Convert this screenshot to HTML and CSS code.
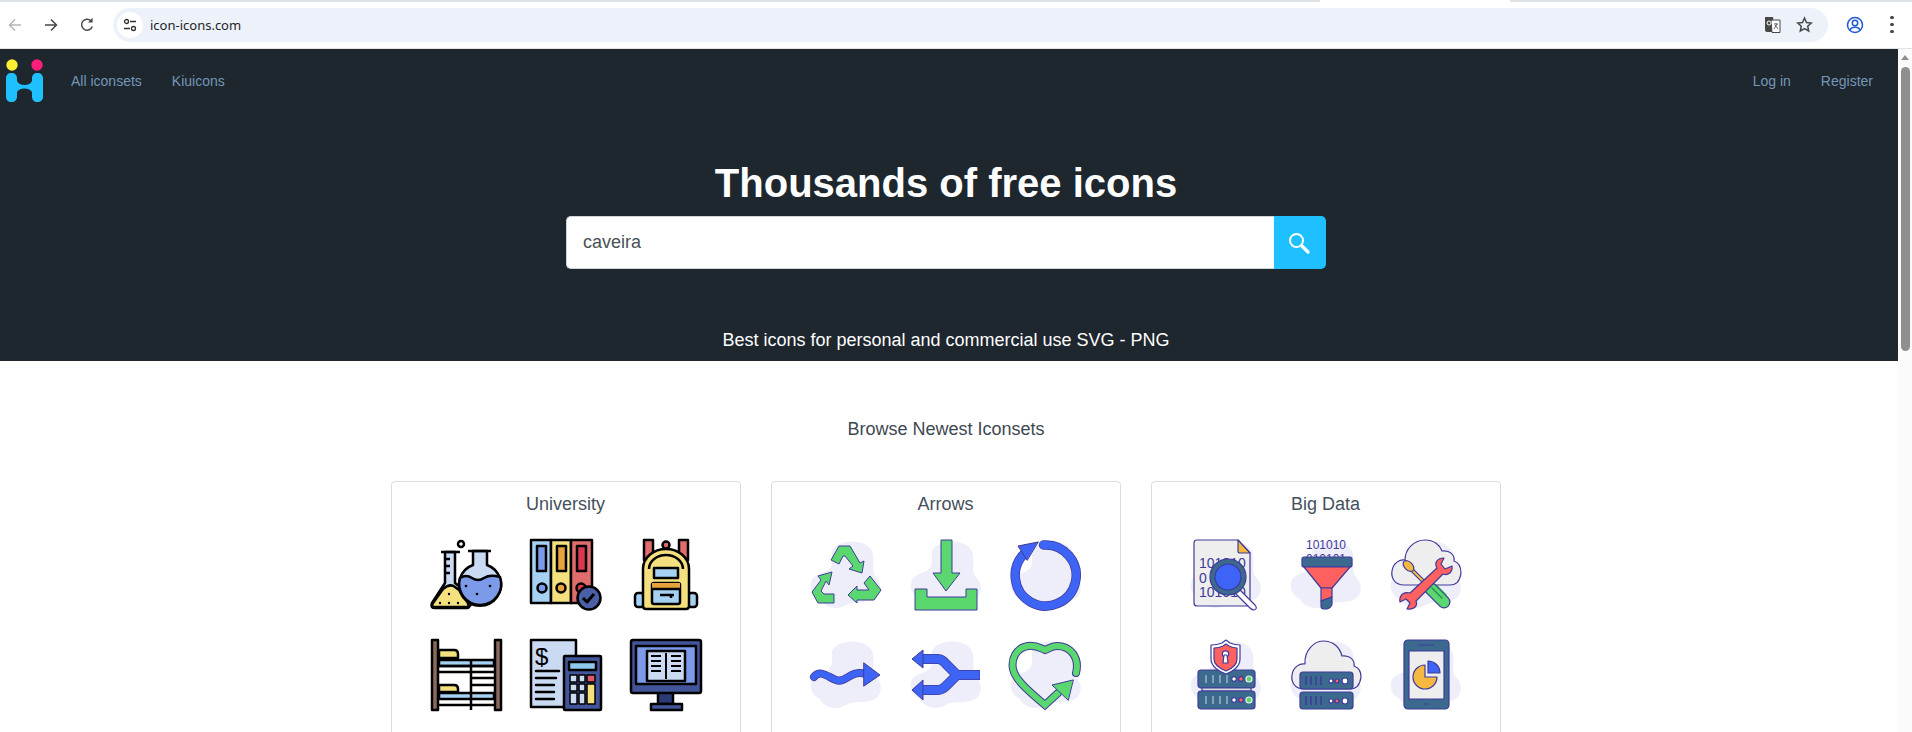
FILE: index.html
```html
<!DOCTYPE html>
<html lang="en">
<head>
    <meta charset="UTF-8">
    <meta name="viewport" content="width=device-width, initial-scale=1.0">
    <title>icon-icons.com</title>
    <link rel="stylesheet" href="styles.css">
</head>
<body>
    <svg class="defs" width="0" height="0">
        <symbol id="blob" viewBox="0 0 72 72">
            <path fill="#eeeefb" d="M22 12C28 0 55-1 62 12C66 22 60 32 66 38C74 46 72 60 60 62C50 64 42 62 36 66C26 72 14 68 10 60C0 56-2 44 4 38C12 32 22 34 22 22Z"/>
        </symbol>
    </svg>

    <!-- browser toolbar -->
    <div class="tabstrip"><span class="tab-gap"></span></div>
    <header class="toolbar">
        <svg class="tool" viewBox="0 0 16 16"><path d="M14 8H2.500M8 2.500 2.500 8 8 13.500" fill="none" stroke="#b4b6b8" stroke-width="1.500"/></svg>
        <svg class="tool" viewBox="0 0 16 16"><path d="M2 8h11.500M8 2.500 13.500 8 8 13.500" fill="none" stroke="#474747" stroke-width="1.500"/></svg>
        <svg class="tool" viewBox="0 0 16 16"><path d="M13.300 9.500A5.500 5.500 0 1 1 12 3.800" fill="none" stroke="#474747" stroke-width="1.500"/><path d="M13.600.800v4.600H9z" fill="#474747"/></svg>
        <div class="urlbar">
            <span class="site-info">
                <svg width="16" height="16" viewBox="0 0 16 16" fill="none" stroke="#303030" stroke-width="1.300"><circle cx="4.500" cy="4.500" r="2"/><path d="M8 4.500h6M2 11.500h6"/><circle cx="11.500" cy="11.500" r="2"/></svg>
            </span>
            <span class="url">icon-icons.com</span>
            <span class="url-actions">
                <svg width="17" height="17" viewBox="0 0 17 17"><path d="M1 1h8l2 15H3a2 2 0 0 1-2-2z" fill="#474747"/><path d="M7 4h9v12.500H8z" fill="#fff" stroke="#474747"/><path d="M10 8h4M12 7v1M13 8l-3 5M11 9l3 4" stroke="#474747" fill="none" stroke-width=".8"/><circle cx="5" cy="7" r="2" fill="none" stroke="#fff"/></svg>
                <svg width="17" height="17" viewBox="0 0 17 17"><path d="M8.500 2l2 4.500 4.800.5-3.600 3.200 1 4.800-4.200-2.500L4.300 15l1-4.800L1.700 7l4.800-.5z" fill="none" stroke="#474747" stroke-width="1.500"/></svg>
            </span>
        </div>
        <svg class="profile" viewBox="0 0 18 18" fill="none" stroke="#1f57d6" stroke-width="1.500"><circle cx="9" cy="9" r="7.500"/><circle cx="9" cy="7" r="2.700"/><path d="M3.800 14c1-2 3-2.800 5.200-2.800s4.200.8 5.200 2.800"/></svg>
        <span class="dots"><i></i><i></i><i></i></span>
    </header>

    <div class="page">
        <div class="content">
            <section class="hero">
                <nav class="topnav">
                    <svg class="logo" viewBox="0 0 37 43">
                        <circle cx="6" cy="6" r="5.700" fill="#fff033"/>
                        <circle cx="31" cy="6" r="5.700" fill="#ff1f7a"/>
                        <path d="M5.500 14C9 14 11 16 11 19.500V22Q13 26 18.500 26T26 22V19.500C26 16 28 14 31.500 14S37 16 37 19.500V37.500C37 41 35 43 31.500 43S26 41 26 37.500V33Q24 29.500 18.500 29.500T11 33V37.500C11 41 9 43 5.500 43S0 41 0 37.500V19.500C0 16 2 14 5.500 14Z" fill="#1fc0ff"/>
                    </svg>
                    <a href="#" class="navlink first">All iconsets</a>
                    <a href="#" class="navlink">Kiuicons</a>
                    <span class="nav-space"></span>
                    <a href="#" class="navlink">Log in</a>
                    <a href="#" class="navlink last">Register</a>
                </nav>
                <h1>Thousands of free icons</h1>
                <form class="search">
                    <input type="text" class="search-input" value="caveira">
                    <button type="button" class="search-btn">
                        <svg width="24" height="24" viewBox="0 0 24 24" fill="none" stroke="#fff"><circle cx="9.500" cy="9.500" r="6.500" stroke-width="2"/><path d="M15 15l6 6" stroke-width="3.200" stroke-linecap="round"/></svg>
                    </button>
                </form>
                <p class="tagline">Best icons for personal and commercial use SVG - PNG</p>
            </section>

            <main class="main">
                <h2 class="browse">Browse Newest Iconsets</h2>
                <div class="cards">

                    <div class="card">
                        <h3>University</h3>
                        <div class="icons">
                            <svg viewBox="0 0 72 72" fill="none" stroke="#000" stroke-width="2.500" stroke-linejoin="round">
                                <circle cx="31" cy="5" r="3"/>
                                <path d="M15 13V44L2 64Q0 69 5 69H38L46 60L25 44V13Z" fill="#c9daf2"/>
                                <path d="M11 13H30M15 20h5M15 27h5M15 34h5"/>
                                <path d="M13 50Q20 44 25 48Q30 52 35 55L39 68H4Q1 68 3 64Z" fill="#f5e07f"/>
                                <path d="M43 12H57V26A21 21 0 1 1 43 26Z" fill="#c9daf2"/>
                                <path d="M38 12H61"/>
                                <path d="M30 39Q36 35 42 39T54 39T70 38A21 21 0 1 1 30 39Z" fill="#7b9be8"/>
                                <g fill="#000" stroke="none"><circle cx="36" cy="47" r="1.300"/><circle cx="47" cy="55" r="1.300"/><circle cx="60" cy="47" r="1.300"/><circle cx="10" cy="64" r="1.200"/><circle cx="19" cy="64" r="1.200"/><circle cx="28" cy="64" r="1.200"/><circle cx="19" cy="55" r="1.200"/></g>
                            </svg>
                            <svg viewBox="0 0 72 72" fill="none" stroke="#000" stroke-width="2.500" stroke-linejoin="round">
                                <rect x="1" y="1" width="20" height="63" fill="#a5d2f2"/>
                                <rect x="21" y="1" width="20" height="63" fill="#f5e07f"/>
                                <rect x="41" y="1" width="21" height="63" fill="#e06c6c"/>
                                <rect x="7" y="7" width="9" height="25" fill="#7b9be8"/>
                                <rect x="27" y="7" width="9" height="25" fill="#e8a33d"/>
                                <rect x="47" y="7" width="9" height="25" fill="#d9384f"/>
                                <circle cx="12" cy="49" r="4.500" fill="#7b9be8"/>
                                <circle cx="31" cy="49" r="4.500" fill="#e8a33d"/>
                                <circle cx="51" cy="49" r="4.500" fill="#d9384f"/>
                                <circle cx="59" cy="59" r="11.500" fill="#4a5fa5"/>
                                <path d="M53 59l4 4 7-8" stroke-width="3"/>
                            </svg>
                            <svg viewBox="0 0 72 72" fill="none" stroke="#000" stroke-width="2.500" stroke-linejoin="round">
                                <circle cx="36" cy="6" r="3.500" fill="#e06c6c"/>
                                <rect x="14" y="1" width="9" height="20" fill="#e06c6c"/>
                                <rect x="49" y="1" width="9" height="20" fill="#e06c6c"/>
                                <rect x="5" y="54" width="9" height="14" rx="3" fill="#a5d2f2"/>
                                <rect x="58" y="54" width="9" height="14" rx="3" fill="#a5d2f2"/>
                                <path d="M13 30C13 18 24 10 36 10S59 18 59 30V67Q59 70 56 70H16Q13 70 13 67Z" fill="#f5e07f"/>
                                <path d="M19 30C19 22 27 16 36 16S53 22 53 30"/>
                                <rect x="24" y="29" width="24" height="10" fill="#a5d2f2"/>
                                <rect x="22" y="44" width="28" height="21" rx="2" fill="#a5d2f2"/>
                                <path d="M22 44H50V50H22Z" fill="#e8a33d" stroke="none"/>
                                <path d="M22 50H50M30 56H44M41 56v3"/>
                            </svg>
                            <svg viewBox="0 0 72 72" fill="none" stroke="#000" stroke-width="2.500" stroke-linejoin="round">
                                <rect x="9" y="21" width="55" height="6" fill="#a5d2f2"/>
                                <rect x="9" y="54" width="55" height="6" fill="#a5d2f2"/>
                                <path d="M9 11H24Q28 11 28 15V19H9Z" fill="#f5e07f"/>
                                <path d="M9 46H24Q28 46 28 50V53H9Z" fill="#f5e07f"/>
                                <path d="M9 33H64M9 27H64M41 21V71M41 39H64M41 46H64M9 66H64M41 33H64"/>
                                <rect x="2" y="1" width="6" height="70" fill="#8a6a5c"/>
                                <rect x="65" y="1" width="6" height="70" fill="#8a6a5c"/>
                            </svg>
                            <svg viewBox="0 0 72 72" fill="none" stroke="#000" stroke-width="2.500" stroke-linejoin="round">
                                <path d="M1 1H46V68H1Z" fill="#c9daf2"/>
                                <text x="5" y="26" class="dollar">$</text>
                                <path d="M6 32H29M6 39H26M6 46H24M6 53H24M6 60H24" stroke-linecap="round"/>
                                <rect x="34" y="17" width="37" height="54" rx="1" fill="#43559a"/>
                                <rect x="39" y="23" width="27" height="8" fill="#8fc8ee"/>
                                <g fill="#c9daf2" stroke-width="1.500">
                                    <rect x="40" y="36" width="7" height="7"/><rect x="49" y="36" width="6" height="7"/>
                                    <rect x="40" y="45" width="7" height="7"/><rect x="49" y="45" width="6" height="7"/>
                                    <rect x="40" y="54" width="7" height="11"/><rect x="49" y="54" width="6" height="11"/>
                                    <rect x="57" y="36" width="8" height="7" fill="#e0596b"/><rect x="57" y="45" width="8" height="20" fill="#f5e07f"/>
                                </g>
                            </svg>
                            <svg viewBox="0 0 72 72" fill="none" stroke="#000" stroke-width="2.500" stroke-linejoin="round">
                                <rect x="28" y="52" width="15" height="13" fill="#2c3a78"/>
                                <rect x="21" y="65" width="31" height="6" fill="#43559a"/>
                                <rect x="1" y="1" width="70" height="53" rx="2" fill="#43559a"/>
                                <rect x="6" y="7" width="60" height="38" fill="#7b9be8"/>
                                <rect x="17" y="12" width="38" height="30" fill="#c9daf2"/>
                                <path d="M36 14V40M21 17H31M21 22H31M21 27H31M21 32H31M41 17H51M41 22H51M41 27H51M41 32H51" stroke-width="2"/>
                            </svg>
                        </div>
                    </div>

                    <div class="card">
                        <h3>Arrows</h3>
                        <div class="icons">
                            <svg viewBox="0 0 72 72" fill="#5ad86f" stroke="#3f3a9a" stroke-width="1" stroke-linejoin="round">
                                <use href="#blob" width="72" height="72" stroke="none"/>
                                <path d="M21 21L29 7H40L50 24L54 22L52 34L39 30L43 27L35 17H33L29 25Z"/>
                                <path d="M8 37L22 33L19 46L16 42L11 52L14 55H24V64H8L2 53L11 41Z"/>
                                <path d="M60 37L71 51L64 61H47V64L38 56L47 47V51H59L54 44Z"/>
                            </svg>
                            <svg viewBox="0 0 72 72" fill="#5ad86f" stroke="#3f3a9a" stroke-width="1" stroke-linejoin="round">
                                <use href="#blob" width="72" height="72" stroke="none"/>
                                <path d="M31 1H42V34H50L36 52L23 34H31Z"/>
                                <path d="M5 50H17V58H56V50H67V71H5Z"/>
                            </svg>
                            <svg viewBox="0 0 72 72" fill="none" stroke-linecap="round">
                                <use href="#blob" width="72" height="72"/>
                                <path d="M33.500 6A30.500 30.500 0 1 1 15 14" stroke="#3f3a9a" stroke-width="9.500"/>
                                <path d="M33.500 6A30.500 30.500 0 1 1 15 14" stroke="#3e64f5" stroke-width="8"/>
                                <path d="M28 3L8 7L17 21Z" fill="#3e64f5" stroke="#3f3a9a" stroke-linejoin="round"/>
                            </svg>
                            <svg viewBox="0 0 72 72" fill="none" stroke-linecap="round">
                                <use href="#blob" width="72" height="72"/>
                                <path d="M4 38C10 30 18 38 26 41C36 45 40 30 56 35" stroke="#3f3a9a" stroke-width="8"/>
                                <path d="M4 38C10 30 18 38 26 41C36 45 40 30 56 35" stroke="#3e64f5" stroke-width="6.500"/>
                                <path d="M54 24L70 36L54 47Z" fill="#3e64f5" stroke="#3f3a9a" stroke-linejoin="round"/>
                            </svg>
                            <svg viewBox="0 0 72 72" fill="none" stroke-linejoin="round">
                                <use href="#blob" width="72" height="72"/>
                                <path d="M10 20H28Q32 20 36 25L47 36L36 47Q32 51 28 51H10M47 36H70" stroke="#3f3a9a" stroke-width="10"/>
                                <path d="M10 20H28Q32 20 36 25L47 36L36 47Q32 51 28 51H10M47 36H69.500" stroke="#3e64f5" stroke-width="8.500"/>
                                <path d="M13 11L2 20L13 29ZM13 41L2 51L13 61Z" fill="#3e64f5" stroke="#3f3a9a"/>
                            </svg>
                            <svg viewBox="0 0 72 72" fill="none" stroke-linecap="round">
                                <use href="#blob" width="72" height="72"/>
                                <path d="M66 34C70 18 60 7 47 7C42 7 38 10 35 11C30 9 26 6 18 7C6 9 1 20 3 30C5 40 16 50 35 66L48 54" stroke="#3f3a9a" stroke-width="8"/>
                                <path d="M66 34C70 18 60 7 47 7C42 7 38 10 35 11C30 9 26 6 18 7C6 9 1 20 3 30C5 40 16 50 35 66L48 54" stroke="#5ad86f" stroke-width="6"/>
                                <path d="M63 41L42 46L58 61Z" fill="#5ad86f" stroke="#3f3a9a" stroke-linejoin="round"/>
                            </svg>
                        </div>
                    </div>

                    <div class="card">
                        <h3>Big Data</h3>
                        <div class="icons">
                            <svg viewBox="0 0 72 72" fill="none" stroke="#3f3a9a" stroke-width="1.200" stroke-linejoin="round">
                                <use href="#blob" width="72" height="72" stroke="none"/>
                                <path d="M7 1H48L60 14V64Q60 67 57 67H7Q4 67 4 64V4Q4 1 7 1Z" fill="#eeeeee"/>
                                <path d="M48 1L60 14H50Q48 14 48 12Z" fill="#f5b942"/>
                                <text x="9" y="29" class="bits-lg">101010</text>
                                <text x="9" y="44" class="bits-lg">0</text>
                                <text x="9" y="58" class="bits-lg">101010</text>
                                <path d="M48 49L65 66Q68 70 64 71Q62 71 60 69L44 53Z" fill="#fff"/>
                                <circle cx="38" cy="38" r="18" fill="#3c6a8f"/>
                                <circle cx="38" cy="38" r="13" fill="#3e64f5"/>
                            </svg>
                            <svg viewBox="0 0 72 72" fill="none" stroke="#3f3a9a" stroke-width="1.200" stroke-linejoin="round">
                                <use href="#blob" width="72" height="72" stroke="none"/>
                                <text x="16" y="10" class="bits">101010</text>
                                <text x="16" y="24" class="bits">010101</text>
                                <rect x="12" y="18" width="50" height="10" rx="2" fill="#3c6a8f"/>
                                <path d="M14 28H60L42 49H31Z" fill="#ff6161"/>
                                <path d="M31 49H42V58L31 62Z" fill="#ff6161"/>
                                <path d="M31 62L42 58V65Q42 68 37 70H34Q31 70 31 67Z" fill="#3c6a8f"/>
                            </svg>
                            <svg viewBox="0 0 72 72" fill="none" stroke="#3f3a9a" stroke-width="1.200" stroke-linejoin="round">
                                <use href="#blob" width="72" height="72" stroke="none"/>
                                <path d="M14 46C4 46 1 38 2 32C3 24 10 20 15 21C15 10 24 1 35 1C44 1 50 6 52 12C60 11 65 16 64 22C70 24 71 30 71 34C70 42 66 46 60 46Z" fill="#eeeeee"/>
                                <path d="M39 48L54 63" stroke-width="13" stroke-linecap="round"/>
                                <path d="M39 48L54 63" stroke="#5ad86f" stroke-width="10.500" stroke-linecap="round"/>
                                <path d="M42 49L52 59M46 46L56 56" stroke="#2e8f5a" stroke-width="1.500" stroke-linecap="round"/>
                                <path d="M22 31L38 47" stroke-width="4"/>
                                <path d="M22 31L38 47" stroke="#f5b942" stroke-width="2"/>
                                <ellipse cx="18.500" cy="27" rx="4" ry="6.500" transform="rotate(-45 18.500 27)" fill="#f5b942"/>
                                <path d="M47 29C44 24 47 19 54 19L51 25L55 30L62 27C63 33 58 37 53 35L26 62C28 67 24 71 17 70L20 64L16 60L10 63C9 57 13 52 20 54Z" fill="#ff6161"/>
                            </svg>
                            <svg viewBox="0 0 72 72" fill="none" stroke="#3f3a9a" stroke-width="1.200" stroke-linejoin="round">
                                <use href="#blob" width="72" height="72" stroke="none"/>
                                <rect x="8" y="31" width="57" height="18" rx="3" fill="#3c6a8f"/>
                                <rect x="12" y="49" width="49" height="3" fill="#ddd"/>
                                <rect x="8" y="52" width="57" height="18" rx="3" fill="#3c6a8f"/>
                                <path d="M16 36V44M23 36V44M30 36V44M37 36V44M16 57V65M23 57V65M30 57V65M37 57V65" stroke="#eee" stroke-opacity=".7"/>
                                <g fill="#fff"><circle cx="44" cy="40" r="2.300"/><circle cx="44" cy="61" r="2.300"/></g>
                                <g fill="#ff6161"><circle cx="51" cy="40" r="2.300"/><circle cx="51" cy="61" r="2.300"/></g>
                                <g fill="#5ad86f" stroke="#eee"><circle cx="59" cy="40" r="3"/><circle cx="59" cy="61" r="3"/></g>
                                <path d="M36 1L40 4Q45 6 50 6V20C50 28 42 33 36 35C30 33 21 28 21 20V6Q27 6 32 4Z" fill="#fff"/>
                                <path d="M36 5L39 7Q43 9 47 9V20C47 26 41 30 36 32C31 30 24 26 24 20V9Q29 9 33 7Z" fill="#ff6161"/>
                                <circle cx="35.500" cy="15" r="3.200" fill="#fff"/>
                                <path d="M34 16H37L38 24H33Z" fill="#fff"/>
                            </svg>
                            <svg viewBox="0 0 72 72" fill="none" stroke="#3f3a9a" stroke-width="1.200" stroke-linejoin="round">
                                <use href="#blob" width="72" height="72" stroke="none"/>
                                <path d="M14 50C4 50 1 42 2 36C3 28 10 24 15 25C14 12 24 2 33 2C44 2 50 9 52 17C60 16 65 21 64 27C70 29 71 34 71 38C70 46 66 50 60 50Z" fill="#eeeeee"/>
                                <rect x="10" y="33" width="53" height="17" rx="3" fill="#3c6a8f"/>
                                <rect x="10" y="53" width="53" height="17" rx="3" fill="#3c6a8f"/>
                                <path d="M16 37V46M21 37V46M26 37V46M31 37V46M16 57V66M21 57V66M26 57V66M31 57V66" stroke-width="1.500"/>
                                <g fill="#fff"><circle cx="41" cy="42" r="2"/><circle cx="41" cy="62" r="2"/><circle cx="55" cy="42" r="3"/><circle cx="55" cy="62" r="3"/></g>
                                <g fill="#ff6161"><circle cx="47" cy="42" r="2"/><circle cx="47" cy="62" r="2"/></g>
                            </svg>
                            <svg viewBox="0 0 72 72" fill="none" stroke="#3f3a9a" stroke-width="1.200" stroke-linejoin="round">
                                <use href="#blob" width="72" height="72" stroke="none"/>
                                <rect x="14" y="1" width="45" height="69" rx="4" fill="#3c6a8f"/>
                                <rect x="19" y="12" width="35" height="48" fill="#eeeeee"/>
                                <path d="M29 6H44M34 65H39"/>
                                <path d="M35 26A12 12 0 1 0 47 38H35Z" fill="#f5b942"/>
                                <path d="M38 22A12 12 0 0 1 50 34H38Z" fill="#3e64f5"/>
                            </svg>
                        </div>
                    </div>

                </div>
            </main>
        </div>

        <div class="scrollbar">
            <span class="scroll-up"></span>
            <span class="scroll-thumb"></span>
        </div>
    </div>
</body>
</html>
```

FILE: styles.css
```css
*
{
    box-sizing: border-box;
}
html, body
{
    height: 100%;
    margin: 0;
    overflow: hidden;
}
body
{
    font-family: "Liberation Sans", Arial, sans-serif;
    background-color: #fff;
    color: #3d4852;
}
.defs
{
    display: block;
    height: 0;
}

/* browser toolbar */
.tabstrip
{
    height: 2px;
    background-color: #dee3e8;
    padding-left: 1320px;
}
.tab-gap
{
    display: block;
    width: 190px;
    height: 2px;
    background-color: #fff;
}
.toolbar
{
    height: 47px;
    display: flex;
    align-items: center;
    padding: 0 0 1px 7px;
    background-color: #fff;
    border-bottom: 1px solid #e3e3e3;
}
.tool
{
    width: 16px;
    height: 16px;
    margin-right: 20px;
}
.urlbar
{
    width: 1715px;
    height: 34px;
    margin-left: -2px;
    display: flex;
    align-items: center;
    background-color: #edf2fa;
    border-radius: 17px;
    padding: 0 15px 0 4px;
}
.site-info
{
    width: 26px;
    height: 26px;
    border-radius: 50%;
    background-color: #fff;
    display: flex;
    align-items: center;
    justify-content: center;
}
.url
{
    margin-left: 7px;
    font-family: "Noto Sans", sans-serif;
    font-size: 13px;
    color: #1f1f1f;
    flex: 1;
}
.url-actions
{
    display: flex;
    gap: 15px;
}
.profile
{
    width: 18px;
    height: 18px;
    margin-left: 18px;
}
.dots
{
    display: flex;
    flex-direction: column;
    gap: 3.500px;
    margin-left: 26px;
}
.dots i
{
    width: 3.500px;
    height: 3.500px;
    border-radius: 50%;
    background-color: #474747;
}

/* page */
.page
{
    display: flex;
    height: 683px;
}
.content
{
    flex: 1;
    min-width: 0;
}
.hero
{
    height: 312px;
    background-color: #1e262e;
    color: #fff;
    display: flex;
    flex-direction: column;
    align-items: center;
    padding-right: 6px;
}
.topnav
{
    align-self: stretch;
    margin-right: -6px;
    display: flex;
    align-items: center;
    height: 53px;
    padding: 10px 25px 0 6px;
}
.logo
{
    width: 37px;
    height: 43px;
}
.navlink
{
    font-size: 14px;
    color: #7596b8;
    text-decoration: none;
    margin-left: 30px;
}
.navlink.first
{
    margin-left: 28px;
}
.nav-space
{
    flex: 1;
}
h1
{
    margin: 57px 0 0;
    font-size: 40px;
    line-height: 48px;
    font-weight: bold;
}
.search
{
    width: 760px;
    height: 53px;
    margin-top: 9px;
    display: flex;
}
.search-input
{
    flex: 1;
    min-width: 0;
    height: 53px;
    border: 1px solid #ced4da;
    border-right: none;
    border-radius: 5px 0 0 5px;
    padding: 0 16px;
    font-family: "Liberation Sans", Arial, sans-serif;
    font-size: 18px;
    color: #495057;
    background-color: #fff;
}
.search-btn
{
    width: 52px;
    height: 53px;
    border: none;
    padding: 0 3px 0 0;
    border-radius: 0 5px 5px 0;
    background-color: #1fc0ff;
    display: flex;
    align-items: center;
    justify-content: center;
}
.tagline
{
    margin: 60px 0 0;
    font-size: 18px;
    line-height: 22px;
}
.main
{
    padding-right: 6px;
}
.browse
{
    margin: 0;
    padding-top: 57px;
    text-align: center;
    font-size: 18px;
    font-weight: normal;
    line-height: 22px;
    color: #3d4852;
}
.cards
{
    display: flex;
    justify-content: center;
    gap: 30px;
    margin-top: 41px;
}
.card
{
    width: 350px;
    padding: 11px 39px 40px 38px;
    border: 1px solid #dcdcdc;
    border-radius: 4px;
    background-color: #fff;
}
.card h3
{
    margin: 0 0 24px;
    text-align: center;
    font-size: 18px;
    font-weight: normal;
    line-height: 22px;
    color: #45505c;
}
.icons
{
    display: grid;
    grid-template-columns: repeat(3, 72px);
    gap: 28px;
}
.icons svg
{
    display: block;
    width: 72px;
    height: 72px;
    overflow: visible;
}
.dollar
{
    font-family: "Liberation Sans", Arial, sans-serif;
    font-size: 24px;
    fill: #000;
    stroke: none;
}
.bits
{
    font-family: "Liberation Sans", Arial, sans-serif;
    font-size: 12px;
    fill: #3f3a9a;
    stroke: none;
}
.bits-lg
{
    font-family: "Liberation Sans", Arial, sans-serif;
    font-size: 14px;
    fill: #3f3a9a;
    stroke: none;
}

/* scrollbar */
.scrollbar
{
    width: 14px;
    background-color: #fbfbfb;
}
.scroll-up
{
    display: block;
    width: 0;
    height: 0;
    margin: 6px auto 0;
    border-left: 4.500px solid transparent;
    border-right: 4.500px solid transparent;
    border-bottom: 5px solid #8f8f8f;
}
.scroll-thumb
{
    display: block;
    width: 9px;
    height: 284px;
    margin: 7px 0 0 3px;
    border-radius: 4.500px;
    background-color: #8f8f8f;
}
```
